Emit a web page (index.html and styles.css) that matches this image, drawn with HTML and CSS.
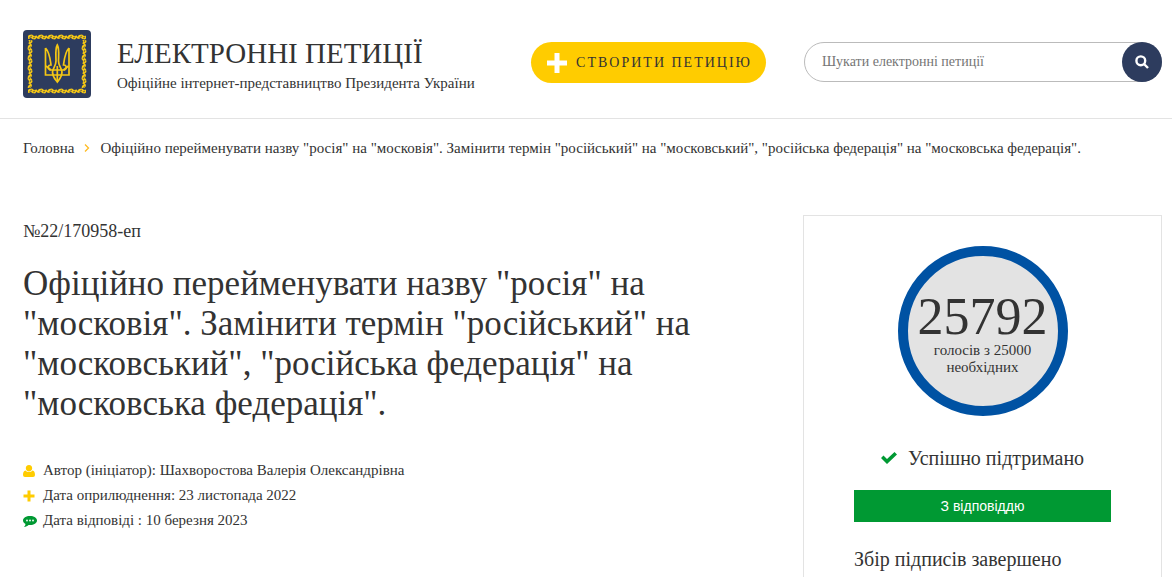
FILE: index.html
```html
<!DOCTYPE html>
<html lang="uk">
<head>
  <meta charset="UTF-8">
  <meta name="viewport" content="width=device-width, initial-scale=1.0">
  <title>Електронні петиції</title>
  <link rel="stylesheet" href="styles.css">
</head>
<body>
  <header class="header">
    <a href="#" class="logo">
      <svg class="logo-icon" viewBox="0 0 68 68" aria-hidden="true">
        <defs>
          <pattern id="leaf-h" width="10" height="6" patternUnits="userSpaceOnUse" x="4" y="4">
            <path d="M0 3L2 1L5 .5L7 2L10 1.500V3.500L8 5.500L5 5L4 3.500L2 5L0 4.500Z" fill="#f5c714"/>
            <path d="M2.500 3.500L5 2M6 4L8 3" stroke="#2d3c5e" stroke-width=".7"/>
          </pattern>
          <pattern id="leaf-v" width="6" height="10" patternUnits="userSpaceOnUse" x="4" y="4">
            <path d="M3 0L1 2L.5 5L2 7L1.500 10H3.500L5.500 8L5 5L3.500 4L5 2L4.500 0Z" fill="#f5c714"/>
            <path d="M3.500 2.500L2 5M4 6L3 8" stroke="#2d3c5e" stroke-width=".7"/>
          </pattern>
        </defs>
        <rect width="68" height="68" rx="4" fill="#2d3c5e"/>
        <rect x="5" y="4" width="58" height="6" fill="url(#leaf-h)"/>
        <rect x="5" y="58" width="58" height="6" fill="url(#leaf-h)"/>
        <rect x="4" y="10" width="6" height="48" fill="url(#leaf-v)"/>
        <rect x="58" y="10" width="6" height="48" fill="url(#leaf-v)"/>
        <g fill="none" stroke="#f5c714" stroke-width="1.700">
          <path d="M22.500 18V45H30M46 18V45H38.500M22.500 18C26.500 22 27 28 28 35C25 35 24 38 27 40H41.500C44.500 38 43.500 35 40.500 35C41.500 28 42 22 46 18"/>
          <path d="M34.300 15C32 19 33 26 33 31C33 36 30 38 29.500 42C29.500 47 32 49 34.300 52C36.500 49 39 47 39 42C38.500 38 35.500 36 35.500 31C35.500 26 36.500 19 34.300 15Z"/>
          <path d="M34.300 36V51M23 36L28 40M45.500 36L40.500 40M30 45H38.500"/>
        </g>
      </svg>
      <span class="logo-text">
        <span class="logo-title">ЕЛЕКТРОННІ ПЕТИЦІЇ</span>
        <span class="logo-subtitle">Офіційне інтернет-представництво Президента України</span>
      </span>
    </a>
    <button type="button" class="btn-create">
      <svg viewBox="0 0 20 20" aria-hidden="true"><path d="M8 0H12V8H20V12H12V20H8V12H0V8H8Z" fill="#fff" stroke="#fff"/></svg>
      СТВОРИТИ ПЕТИЦІЮ
    </button>
    <form class="search">
      <input type="text" class="search-input" placeholder="Шукати електронні петиції" aria-label="Шукати електронні петиції">
      <button type="submit" class="search-btn" aria-label="Пошук">
        <svg viewBox="0 0 14 14" aria-hidden="true"><g fill="none" stroke="#fff" stroke-width="2.400"><circle cx="5.800" cy="5.800" r="4.400"/><path d="M9 9L13 13"/></g></svg>
      </button>
    </form>
  </header>

  <nav class="breadcrumbs">
    <a href="#">Головна</a>
    <svg viewBox="0 0 6 8" aria-hidden="true"><path d="M1 .5L4.500 4L1 7.500" fill="none" stroke="#fb2" stroke-width="1.300"/></svg>
    <span>Офіційно перейменувати назву "росія" на "московія". Замінити термін "російський" на "московський", "російська федерація" на "московська федерація".</span>
  </nav>

  <main class="content">
    <article class="petition">
      <div class="petition-number">№22/170958-еп</div>
      <h1>Офіційно перейменувати назву "росія" на "московія". Замінити термін "російський" на "московський", "російська федерація" на "московська федерація".</h1>
      <ul class="petition-meta">
        <li>
          <svg viewBox="0 0 12 12" aria-hidden="true"><path d="M6 0C8.200 0 9.200 1.400 9.200 3.200S7.800 6.400 6 6.400S2.800 5 2.800 3.200S3.800 0 6 0ZM2.600 5.600C3.400 6.600 4.600 7.100 6 7.100S8.600 6.600 9.400 5.600C11.500 6 12 8 12 10Q12 12 10 12H2Q0 12 0 10C0 8 .5 6 2.600 5.600Z" fill="#fc0"/></svg>
          Автор (ініціатор): Шахворостова Валерія Олександрівна
        </li>
        <li>
          <svg viewBox="0 0 12 12" aria-hidden="true"><path d="M4.500 .5H7.500V4.500H11.500V7.500H7.500V11.500H4.500V7.500H.5V4.500H4.500Z" fill="#fc0"/></svg>
          Дата оприлюднення: 23 листопада 2022
        </li>
        <li>
          <svg class="wide" viewBox="0 0 14 12" aria-hidden="true"><path d="M7 1C11 1 14 3 14 5.500S11 10 7 10L5.500 9.900C4.500 11 3 11.700 1 12C2 11 2.500 10 2.500 9C1 8 0 7 0 5.500C0 3 3 1 7 1Z" fill="#093"/><g fill="#fff"><circle cx="4" cy="5.500" r=".9"/><circle cx="7" cy="5.500" r=".9"/><circle cx="10" cy="5.500" r=".9"/></g></svg>
          Дата відповіді : 10 березня 2023
        </li>
      </ul>
    </article>

    <aside class="sidebar">
      <div class="votes">
        <span class="votes-count">25792</span>
        <span class="votes-text">голосів з 25000 необхідних</span>
      </div>
      <div class="status">
        <svg viewBox="0 0 16 12" aria-hidden="true"><path d="M0 6L2.500 3.500L6 7L13.500 0L16 2.500L6 12Z" fill="#093"/></svg>
        Успішно підтримано
      </div>
      <button type="button" class="btn-answer">З відповіддю</button>
      <div class="finished">Збір підписів завершено</div>
    </aside>
  </main>
</body>
</html>
```
FILE: styles.css
```css
* {
  box-sizing: border-box;
}

body {
  margin: 0;
  font-family: Georgia, "Liberation Serif", serif;
  font-size: 15px;
  color: #333;
  background: #fff;
}

a {
  color: inherit;
  text-decoration: none;
}

button,
input {
  font-family: inherit;
}

button {
  border: none;
  cursor: pointer;
}

.header {
  display: flex;
  align-items: flex-start;
  padding: 30px 10px 20px 23px;
  border-bottom: 1px solid #e3e3e3;
}

.logo {
  display: flex;
  flex: 1;
  gap: 26px;
}

.logo-icon {
  width: 68px;
  height: 68px;
}

.logo-text {
  display: flex;
  flex-direction: column;
  padding-top: 3px;
  white-space: nowrap;
}

.logo-title {
  font-size: 29px;
  line-height: 40px;
}

.logo-subtitle {
  line-height: 20px;
}

.btn-create {
  display: flex;
  align-items: center;
  gap: 9px;
  height: 41px;
  margin: 12px 38px 0 0;
  padding: 0 14px 0 16px;
  border-radius: 21px;
  background: #fc0;
  color: #333;
  font-size: 14px;
  letter-spacing: 2px;
  white-space: nowrap;
}

.btn-create svg {
  width: 20px;
  height: 20px;
}

.search {
  position: relative;
  width: 358px;
  margin-top: 12px;
}

.search-input {
  display: block;
  width: 100%;
  height: 40px;
  padding: 0 50px 0 17px;
  border: 1px solid #bbb;
  border-radius: 20px;
  font-size: 14px;
}

.search-input::placeholder {
  color: #757575;
}

.search-btn {
  position: absolute;
  top: 0;
  right: 0;
  display: flex;
  align-items: center;
  justify-content: center;
  width: 40px;
  height: 40px;
  padding: 0;
  border-radius: 50%;
  background: #2d3c5e;
}

.search-btn svg {
  width: 14px;
  height: 14px;
}

.breadcrumbs {
  display: flex;
  align-items: center;
  gap: 10px;
  padding: 19px 10px 0 23px;
  line-height: 20px;
}

.breadcrumbs svg {
  width: 6px;
  height: 8px;
}

.content {
  display: flex;
  justify-content: space-between;
  padding: 57px 10px 40px 23px;
}

.petition {
  flex: 1;
  padding-right: 60px;
}

.petition-number {
  padding-top: 6px;
  font-size: 18px;
  line-height: 20px;
}

h1 {
  margin: 23px 0 34px;
  font-size: 35px;
  font-weight: normal;
  line-height: 40px;
}

.petition-meta {
  margin: 0;
  padding: 0;
  list-style: none;
  line-height: 25px;
}

.petition-meta li {
  display: flex;
  align-items: center;
  gap: 8px;
}

.petition-meta svg {
  width: 12px;
  height: 12px;
}

.petition-meta .wide {
  width: 14px;
  margin-right: -2px;
}

.sidebar {
  width: 359px;
  padding: 30px 50px;
  border: 1px solid #e3e3e3;
}

.votes {
  display: flex;
  flex-direction: column;
  align-items: center;
  width: 170px;
  height: 170px;
  margin: 0 auto 30px;
  padding-top: 36px;
  border: 10px solid #0052a3;
  border-radius: 50%;
  background: #e3e3e3;
  text-align: center;
}

.votes-count {
  font-size: 52px;
  line-height: 50px;
}

.votes-text {
  width: 120px;
  line-height: 17px;
}

.status {
  display: flex;
  align-items: center;
  justify-content: center;
  gap: 11px;
  margin-bottom: 20px;
  font-size: 20px;
  line-height: 24px;
}

.status svg {
  width: 16px;
  height: 12px;
}

.btn-answer {
  width: 100%;
  height: 32px;
  background: #093;
  color: #fff;
  font-family: Arial, "Liberation Sans", sans-serif;
  font-size: 14px;
}

.finished {
  margin-top: 25px;
  font-size: 20px;
  line-height: 24px;
}
```
